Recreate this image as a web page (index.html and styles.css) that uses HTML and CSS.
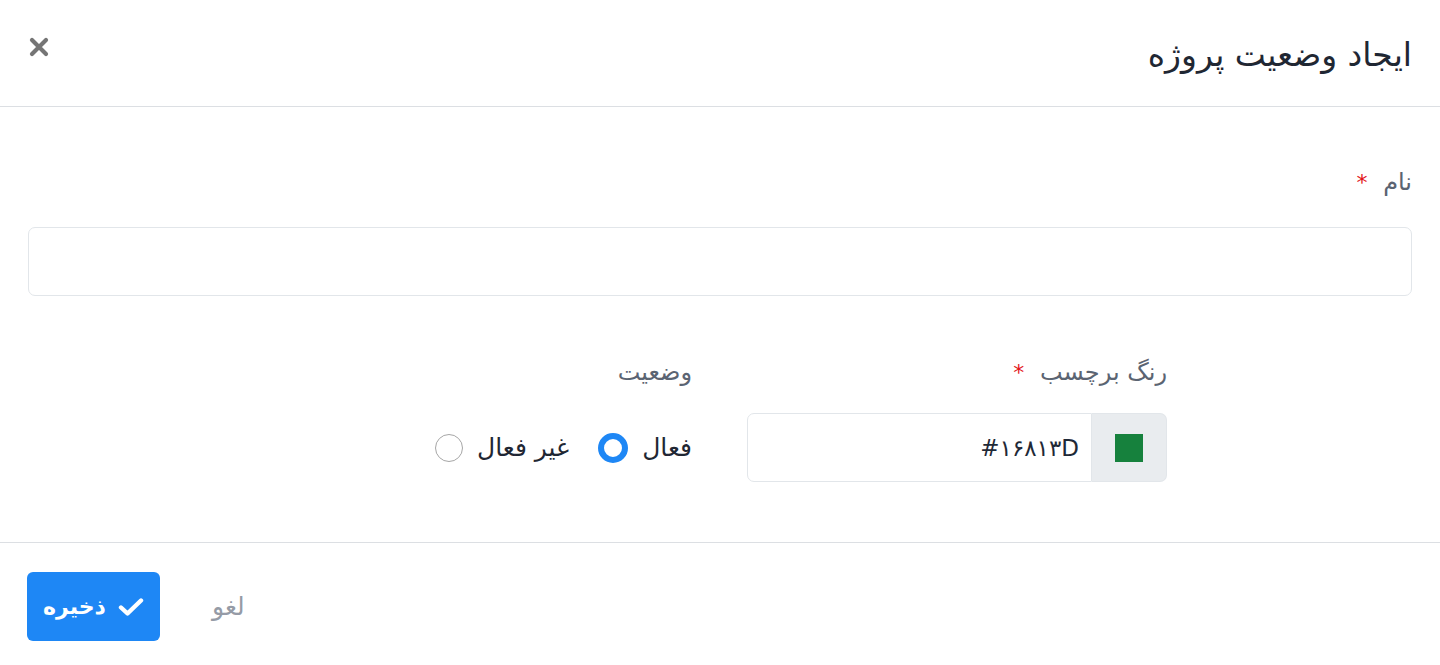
FILE: index.html
```html
<!DOCTYPE html>
<html lang="fa" dir="rtl">
<head>
    <meta charset="UTF-8">
    <meta name="viewport" content="width=device-width, initial-scale=1.0">
    <title>ایجاد وضعیت پروژه</title>
    <link rel="stylesheet" href="styles.css">
</head>
<body>
    <div class="modal">
        <div class="modal-header">
            <h1 class="modal-title">ایجاد وضعیت پروژه</h1>
            <button type="button" class="close-btn" aria-label="بستن">
                <svg width="22" height="22" viewBox="0 0 22 22">
                    <path d="M4 4 L18 18 M18 4 L4 18" stroke="#757575" stroke-width="4.2" stroke-linecap="round"/>
                </svg>
            </button>
        </div>

        <form class="modal-body" novalidate>
            <div class="form-group">
                <label for="name" class="form-label">نام <span class="required">*</span></label>
                <input type="text" id="name" class="form-control">
            </div>

            <div class="form-row">
                <div class="form-group color-group">
                    <label for="color" class="form-label">رنگ برچسب <span class="required">*</span></label>
                    <div class="input-group">
                        <span class="input-addon"><span class="swatch"></span></span>
                        <input type="text" id="color" class="form-control color-input" value="#۱۶۸۱۳D" dir="ltr">
                    </div>
                </div>

                <div class="form-group">
                    <span class="form-label">وضعیت</span>
                    <div class="radio-list">
                        <label class="radio">
                            <span class="radio-text">فعال</span>
                            <span class="radio-mark checked"></span>
                        </label>
                        <label class="radio">
                            <span class="radio-text">غیر فعال</span>
                            <span class="radio-mark"></span>
                        </label>
                    </div>
                </div>
            </div>
        </form>

        <div class="modal-footer">
            <button type="submit" class="btn-save">
                <svg width="26" height="20" viewBox="0 0 26 20">
                    <path d="M3 10.5 L9.5 16.5 L23 3.5" fill="none" stroke="#fff" stroke-width="4.4" stroke-linecap="round" stroke-linejoin="round"/>
                </svg>
                <span>ذخیره</span>
            </button>
            <button type="button" class="btn-cancel">لغو</button>
        </div>
    </div>
</body>
</html>
```

FILE: styles.css
```css
body {
    margin: 0;
    background-color: #fff;
    font-family: "DejaVu Sans", "Noto Sans", sans-serif;
    color: #1f2937;
}
.modal {
    width: 100%;
}
.modal-header {
    display: flex;
    align-items: center;
    justify-content: space-between;
    height: 106px;
    padding: 0 28px;
    border-bottom: 1px solid #dcdfe3;
}
.modal-title {
    margin: 0;
    font-size: 33px;
    font-weight: normal;
    color: #1f2733;
    padding-top: 2px;
}
.close-btn {
    background: none;
    border: none;
    padding: 0;
    margin-top: -12px;
    cursor: pointer;
    display: flex;
}
.modal-body {
    padding: 60px 28px 60px;
}
.form-label {
    display: block;
    height: 30px;
    font-size: 24px;
    line-height: 30px;
    color: #5b6472;
    margin-bottom: 30px;
}
.required {
    color: #e3151a;
    font-size: 22px;
    line-height: 1;
    margin-right: 8px;
}
.form-control {
    display: block;
    width: 100%;
    box-sizing: border-box;
    height: 69px;
    border: 1px solid #e2e6ea;
    border-radius: 7px;
    background: #fff;
    font-family: inherit;
    font-size: 23px;
    padding: 0 12px;
    outline: none;
}
.form-row {
    display: flex;
    gap: 55px;
    padding-right: 245px;
    margin-top: 61px;
}
.form-row .form-label {
    margin-bottom: 26px;
}
.color-group {
    width: 420px;
}
.input-group {
    display: flex;
}
.input-addon {
    display: flex;
    align-items: center;
    justify-content: center;
    flex-shrink: 0;
    width: 75px;
    height: 69px;
    box-sizing: border-box;
    background: #e9ecef;
    border: 1px solid #e2e6ea;
    border-left: none;
    border-radius: 0 7px 7px 0;
}
.swatch {
    width: 28px;
    height: 28px;
    background: #16813d;
}
.color-input {
    flex: 1;
    border-radius: 7px 0 0 7px;
    text-align: right;
    color: #1f2937;
}
.radio-list {
    display: flex;
    align-items: center;
    height: 69px;
    gap: 29px;
}
.radio {
    display: flex;
    align-items: center;
    gap: 14px;
    font-size: 25px;
    line-height: 30px;
    color: #1f2733;
    cursor: pointer;
}
.radio-mark {
    flex-shrink: 0;
    width: 26px;
    height: 26px;
    border: 1.5px solid #a6a6a6;
    border-radius: 50%;
}
.radio-mark.checked {
    width: 18px;
    height: 18px;
    border: 6px solid #1e87f5;
    background: #fff;
}
.modal-footer {
    display: flex;
    align-items: center;
    gap: 52px;
    direction: ltr;
    padding: 29px 27px 24px;
    border-top: 1px solid #dcdfe3;
}
.btn-save {
    display: flex;
    align-items: center;
    flex-direction: row-reverse;
    gap: 12px;
    width: 133px;
    height: 69px;
    justify-content: center;
    background: #1e87f5;
    color: #fff;
    border: none;
    border-radius: 6px;
    font-family: inherit;
    font-size: 22px;
    font-weight: bold;
    cursor: pointer;
}
.btn-cancel {
    background: none;
    border: none;
    padding: 0;
    font-family: inherit;
    font-size: 25px;
    color: #959ba6;
    cursor: pointer;
}
```
